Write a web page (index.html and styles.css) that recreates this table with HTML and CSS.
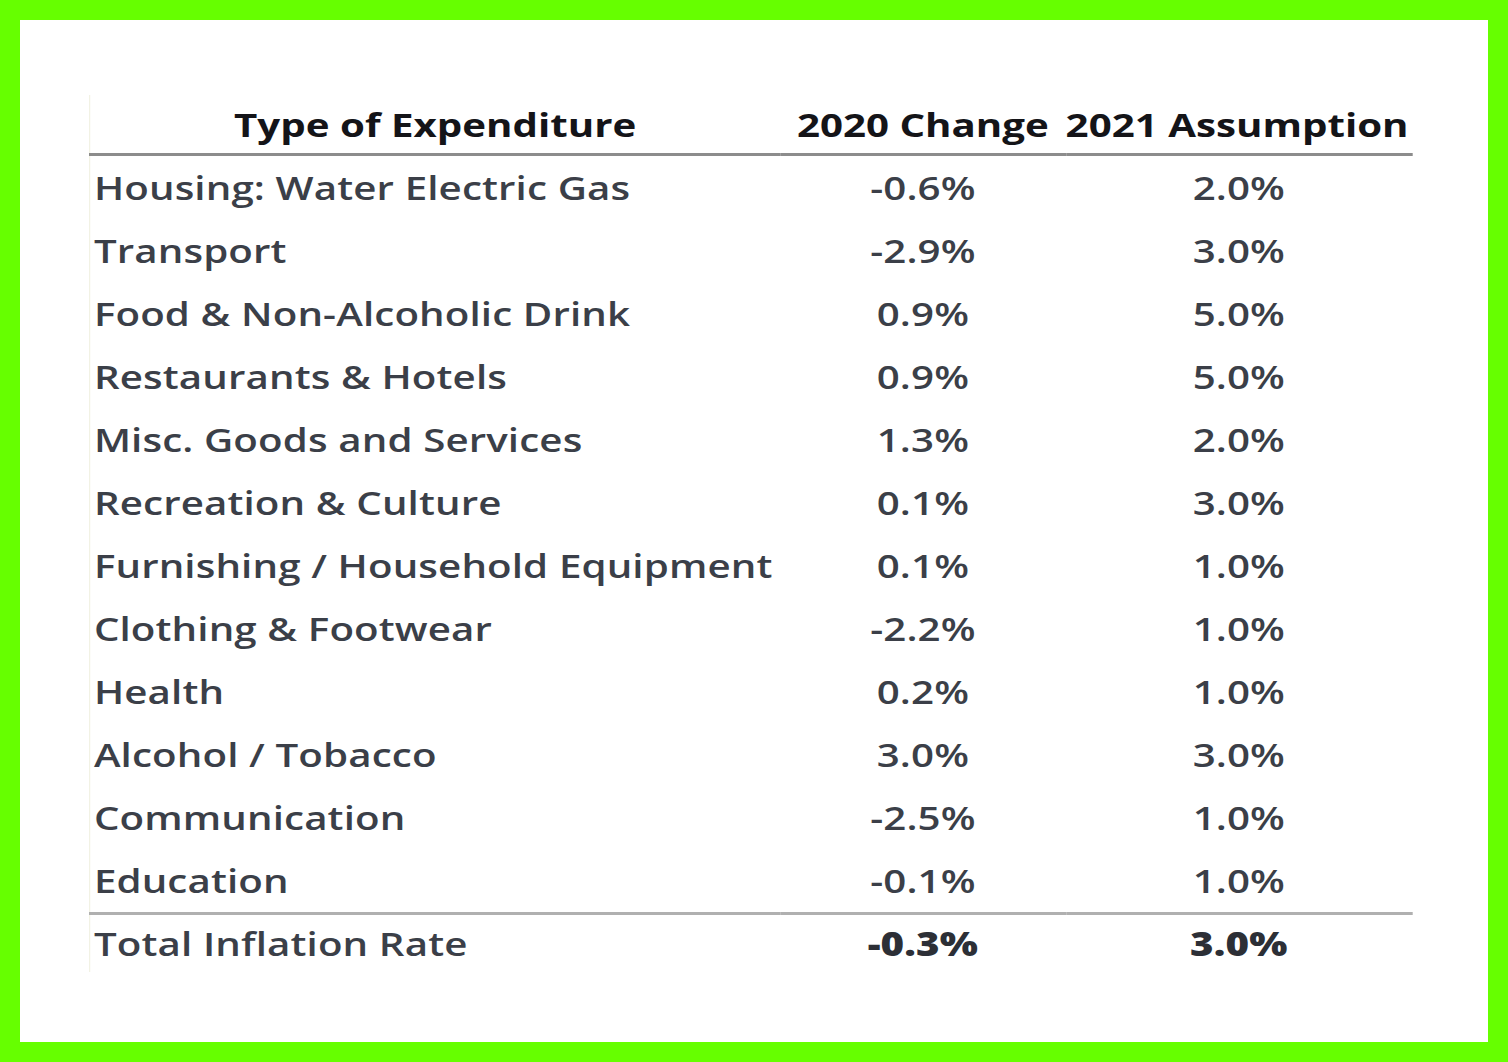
FILE: index.html
```html
<!DOCTYPE html>
<html>
<head>
<meta charset="utf-8">
<link rel="stylesheet" href="styles.css">
</head>
<body>
<div class="frame">
  <table class="infl">
    <colgroup>
      <col class="c1"><col class="c2"><col class="c3">
    </colgroup>
    <thead>
      <tr><th class="name-h">Type of Expenditure</th><th>2020 Change</th><th class="last-h">2021 Assumption</th></tr>
    </thead>
    <tbody>
      <tr><td>Housing: Water Electric Gas</td><td>-0.6%</td><td>2.0%</td></tr>
      <tr><td>Transport</td><td>-2.9%</td><td>3.0%</td></tr>
      <tr><td>Food &amp; Non-Alcoholic Drink</td><td>0.9%</td><td>5.0%</td></tr>
      <tr><td>Restaurants &amp; Hotels</td><td>0.9%</td><td>5.0%</td></tr>
      <tr><td>Misc. Goods and Services</td><td>1.3%</td><td>2.0%</td></tr>
      <tr><td>Recreation &amp; Culture</td><td>0.1%</td><td>3.0%</td></tr>
      <tr><td>Furnishing / Household Equipment</td><td>0.1%</td><td>1.0%</td></tr>
      <tr><td>Clothing &amp; Footwear</td><td>-2.2%</td><td>1.0%</td></tr>
      <tr><td>Health</td><td>0.2%</td><td>1.0%</td></tr>
      <tr><td>Alcohol / Tobacco</td><td>3.0%</td><td>3.0%</td></tr>
      <tr><td>Communication</td><td>-2.5%</td><td>1.0%</td></tr>
      <tr><td>Education</td><td>-0.1%</td><td>1.0%</td></tr>
    </tbody>
    <tfoot>
      <tr><td>Total Inflation Rate</td><td class="b">-0.3%</td><td class="b">3.0%</td></tr>
    </tfoot>
  </table>
</div>
</body>
</html>
```
FILE: styles.css
```css
html, body {
  margin: 0;
  padding: 0;
  background: #66ff00;
}
body {
  padding: 20px;
  box-sizing: border-box;
  width: 1508px;
  height: 1062px;
}
.frame {
  background: #ffffff;
  height: 1022px;
  box-sizing: border-box;
  padding: 75px 0 0 69px;
}
/* the source image is a horizontally stretched spreadsheet capture */
.infl {
  border-collapse: collapse;
  table-layout: fixed;
  width: 1084px;
  transform: scaleX(1.22);
  transform-origin: left top;
  font-family: "Open Sans", Lato, sans-serif;
  font-size: 33px;
  font-weight: 600;
  letter-spacing: 0.1px;
  color: #3b3f48;
  border-left: 1px solid #f2f2e4;
}
.c1 { width: 566px; }
.c2 { width: 234px; }
.c3 { width: 284px; }
.infl th {
  height: 58px;
  padding: 0;
  font-weight: 700;
  letter-spacing: 0;
  color: #141418;
  text-align: center;
  vertical-align: middle;
  border-bottom: 3px solid #8c8c8c;
  white-space: nowrap;
}
.infl th.last-h {
  text-align: left;
  padding-left: 0;
}
.infl td {
  height: 63px;
  padding: 0;
  text-align: center;
  vertical-align: middle;
  white-space: nowrap;
}
.infl td:first-child {
  text-align: left;
  padding-left: 3px;
}
.infl tfoot td {
  border-top: 3px solid #b0b0b0;
  height: 57px;
}
.infl td.b {
  font-weight: 800;
  color: #2c2f36;
}
```
